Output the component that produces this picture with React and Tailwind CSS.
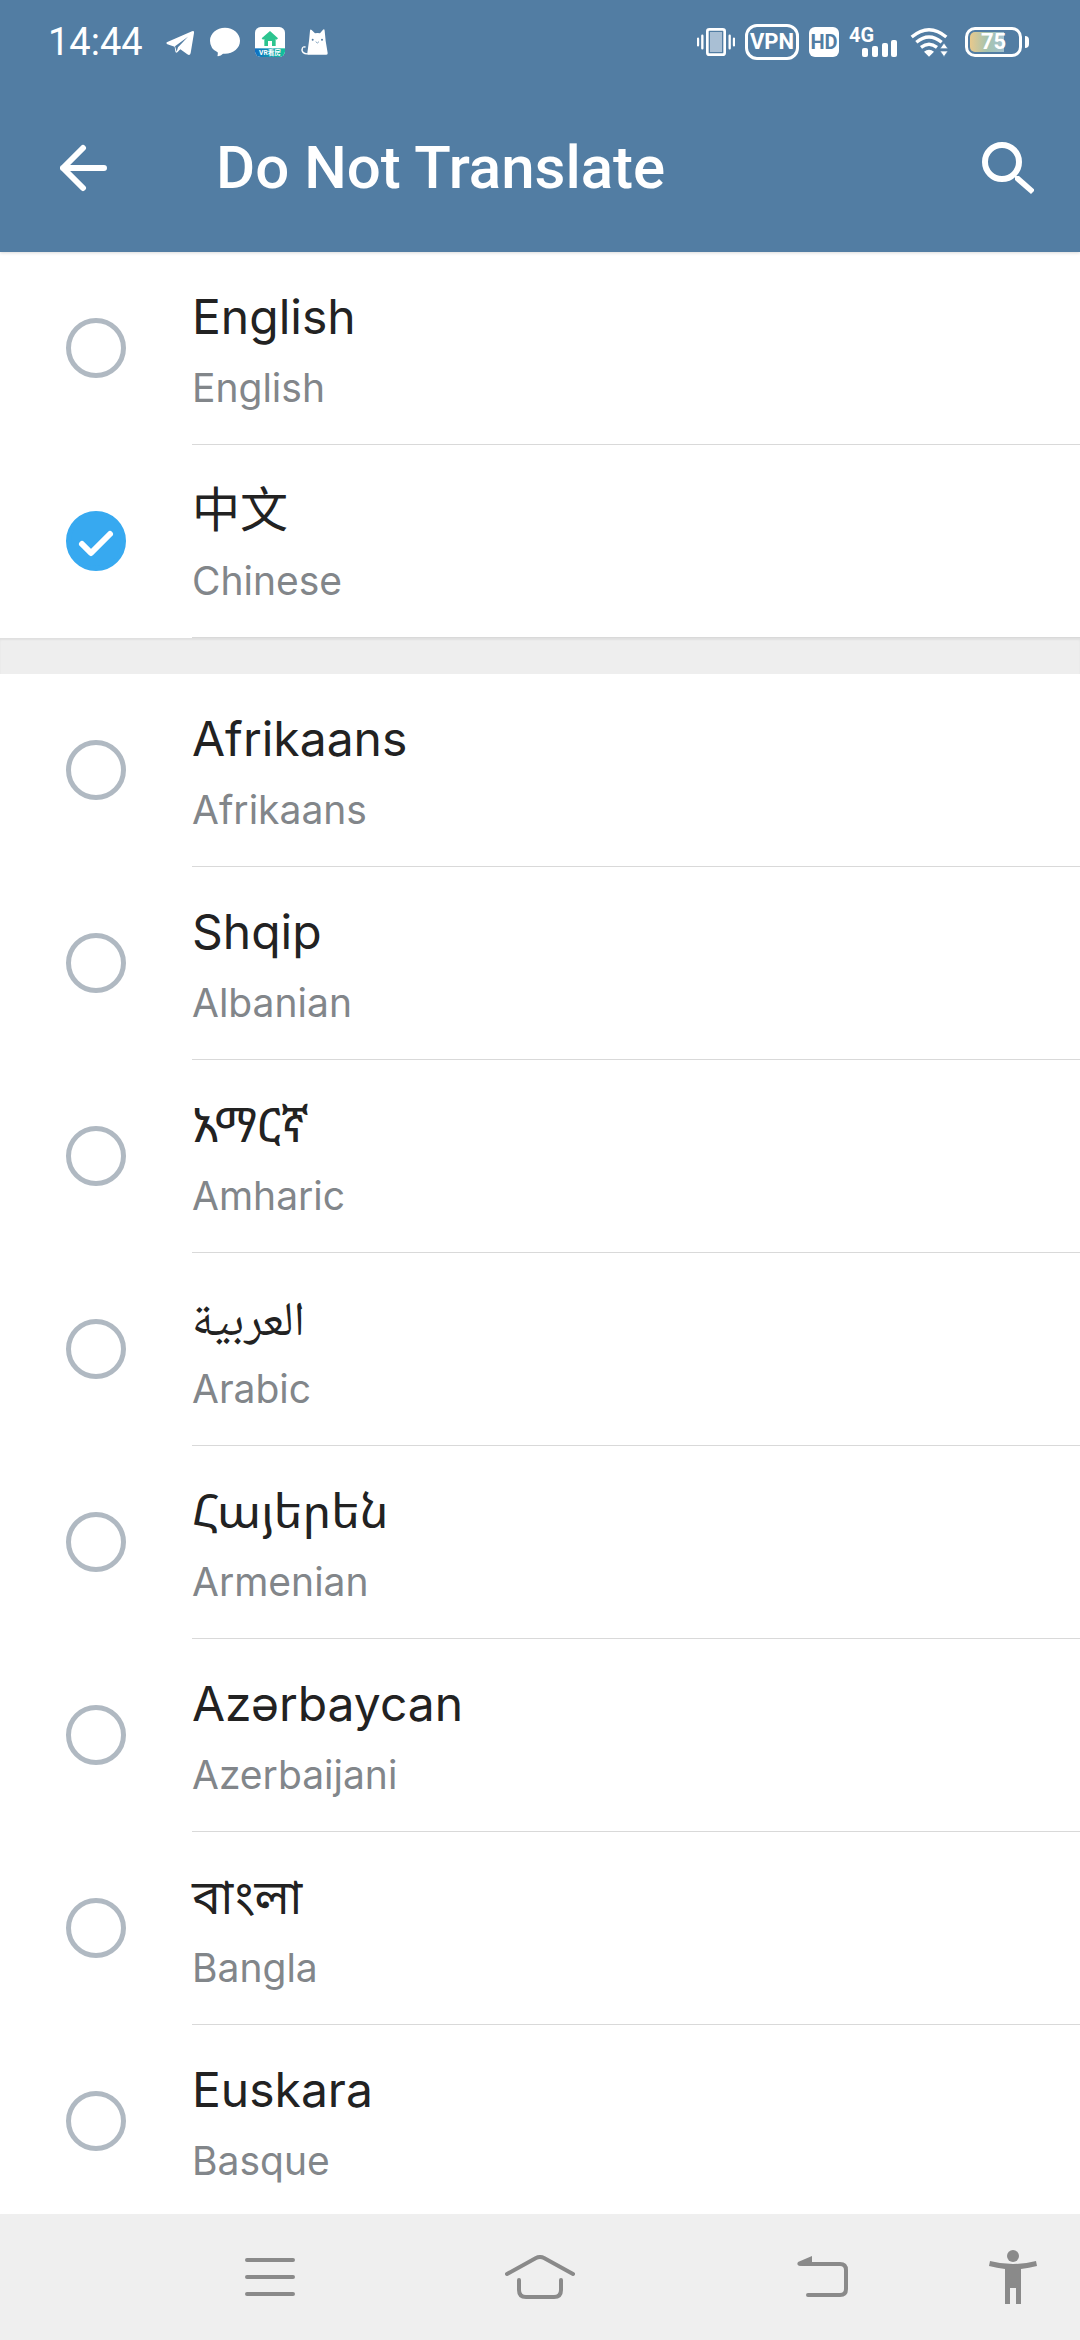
import React, { useState } from 'react';

const SUGGESTED = [
    { code: 'en', native: 'English', name: 'English' },
    { code: 'zh', native: '中文', name: 'Chinese' },
];

const LANGUAGES = [
    { code: 'af', native: 'Afrikaans', name: 'Afrikaans' },
    { code: 'sq', native: 'Shqip', name: 'Albanian' },
    { code: 'am', native: 'አማርኛ', name: 'Amharic' },
    { code: 'ar', native: 'العربية', name: 'Arabic' },
    { code: 'hy', native: 'Հայերեն', name: 'Armenian' },
    { code: 'az', native: 'Azərbaycan', name: 'Azerbaijani' },
    { code: 'bn', native: 'বাংলা', name: 'Bangla' },
    { code: 'eu', native: 'Euskara', name: 'Basque' },
];

const StatusBar = () => (
    <div className='flex h-[84px] items-center justify-between pl-12 pr-[51px] font-[Roboto,"Noto_Sans_CJK_SC",sans-serif]'>
        <div className="flex items-center gap-[15px]">
            <span className="mr-2 text-[38px] leading-none">14:44</span>
            {/* Telegram */}
            <svg viewBox="0 0 87 90" className="h-[30px] w-[29px]" fill="currentColor">
                <path d="M4 45 L78 13 Q85 10 84 18 L74 78 Q72 87 64 82 L43 67 L34 76 Q29 80 28 73 L26 59 L4 52 Q-2 48 4 45Z" />
                <path d="M27 58 L66 29 L36 61 L32 74Z" className="fill-[#527da3]" />
            </svg>
            {/* Chat bubble */}
            <svg viewBox="0 0 90 90" className="h-[30px] w-[30px]" fill="currentColor">
                <path d="M45 2C70 2 90 19 90 41S70 80 45 80Q42 80 39 80Q33 86 24 88Q21 88 23 84Q24 80 23 76Q0 65 0 41C0 19 20 2 45 2Z" />
            </svg>
            {/* Home app */}
            <svg viewBox="0 0 90 90" className="h-[30px] w-[30px]">
                <defs>
                    <linearGradient id="homeBand">
                        <stop offset="0" stopColor="#0f6ec4" />
                        <stop offset="1" stopColor="#12c39a" />
                    </linearGradient>
                    <clipPath id="homeClip">
                        <rect width="90" height="90" rx="17" />
                    </clipPath>
                </defs>
                <g clipPath="url(#homeClip)">
                    <rect width="90" height="90" fill="#fff" />
                    <rect y="64" width="90" height="26" fill="url(#homeBand)" />
                    <path d="M45 12 L69 34 L65 38 L62 36 V57 H51 V42 H39 V57 H28 V36 L24 38 L20 34Z" fill="#2cc48f" />
                    <text x="45" y="84" textAnchor="middle" fill="#fff" fontSize="20" fontWeight="700">VR看房</text>
                </g>
            </svg>
            {/* Cat */}
            <svg viewBox="0 0 90 90" className="h-[30px] w-[30px]">
                <path d="M30 11Q31 5 35 9L45 19Q53 17 60 19L69 8Q73 4 74 11L77 42L83 78Q84 83 79 83H26Q21 83 22 78L27 42Z" fill="currentColor" />
                <path d="M27 80C12 83 3 74 7 64Q9 58 15 60" fill="none" stroke="currentColor" strokeWidth="4" strokeLinecap="round" />
                <g fill="#527da3">
                    <circle cx="38" cy="38" r="3" />
                    <circle cx="66" cy="38" r="3" />
                    <path d="M47 44l5 4 5-4" fill="none" stroke="#527da3" strokeWidth="2" />
                </g>
            </svg>
        </div>

        <div className="flex items-center gap-[10px] font-bold">
            {/* Vibrate */}
            <svg viewBox="0 0 114 90" className="h-[30px] w-[38px]">
                <rect x="31" y="7" width="52" height="76" rx="6" fill="none" stroke="currentColor" strokeWidth="8" />
                <rect x="39" y="15" width="36" height="60" fill="#a9bfd4" />
                <path d="M3 35v20M16 26v38M98 26v38M111 35v20" stroke="currentColor" strokeWidth="7" strokeLinecap="round" />
            </svg>
            <span className="flex h-9 w-[54px] items-center justify-center rounded-xl border-3 border-white text-[22px] leading-none">VPN</span>
            <span className="flex h-[30px] w-[30px] items-center justify-center rounded-md bg-white text-[20px] leading-none text-[#527da3]">HD</span>
            <span className="flex h-[30px] w-[50px] items-start">
                <span className="text-[20px] leading-4">4G</span>
                <svg viewBox="0 0 36 30" className="-ml-3 h-[30px] w-9 shrink-0" fill="currentColor">
                    <rect x="0" y="21" width="6" height="9" rx="2" />
                    <rect x="10" y="19" width="6" height="11" rx="2" />
                    <rect x="20" y="16" width="6" height="14" rx="2" />
                    <rect x="29" y="13" width="6" height="17" rx="2" />
                </svg>
            </span>
            {/* Wifi */}
            <svg viewBox="0 0 120 90" className="h-[30px] w-10">
                <g fill="none" stroke="currentColor" strokeWidth="10">
                    <path d="M8 30Q60 -14 112 30" />
                    <path d="M22 46Q60 14 98 46" />
                    <path d="M36 61Q60 42 84 61" />
                </g>
                <path d="M45 74Q60 62 75 74L60 89Z" fill="currentColor" />
                <path d="M105 48l12 17H93zM93 72h24l-12 17z" fill="currentColor" stroke="#527da3" strokeWidth="2" />
            </svg>
            {/* Battery */}
            <span className="flex items-center gap-[3px] pl-[6px]">
                <span className="relative flex h-[30px] w-[57px] items-center justify-center rounded-[10px] border-3 border-white">
                    <span className="absolute inset-y-[2px] left-[2px] w-[34px] rounded-l-[5px] bg-linear-to-r from-[#e8c98c] via-[#a5c3ae] to-[#a3c1cf]" />
                    <span className="relative text-[22px] leading-none">75</span>
                </span>
                <span className="h-3 w-1 rounded-r-full bg-white" />
            </span>
        </div>
    </div>
);

const Header = () => (
    <header className="relative z-10 shrink-0 bg-[#527da3] text-white shadow-[0_1px_3px_rgba(0,0,0,0.15)]">
        <StatusBar />
        <div className="flex h-[168px] items-center">
            <button type="button" aria-label="Back" className="flex h-full w-[168px] items-center justify-center">
                <svg viewBox="0 0 48 48" className="h-12 w-12" fill="none" stroke="currentColor" strokeWidth="6" strokeLinecap="round" strokeLinejoin="round">
                    <path d="M23 4 L3 24 L23 44M3 24H44" />
                </svg>
            </button>
            <h1 className="ml-12 flex-1 font-[Roboto,sans-serif] text-[60px] font-medium leading-none">Do Not Translate</h1>
            <button type="button" aria-label="Search" className="flex h-full w-36 items-center justify-center">
                <svg viewBox="0 0 52 52" className="h-[52px] w-[52px]" fill="none" stroke="currentColor">
                    <circle cx="20" cy="20" r="17" strokeWidth="6" />
                    <path d="M33 34 L37 34 L53 48 L49 52 L33 38Z" fill="currentColor" stroke="none" />
                </svg>
            </button>
        </div>
    </header>
);

const LanguageRow = ({ language, checked, onToggle }) => (
    <label className="flex cursor-pointer">
        <span className="flex w-48 shrink-0 items-center pb-0.5 pl-[66px]">
            <span className="relative flex">
                <input
                    type="checkbox"
                    checked={checked}
                    onChange={() => onToggle(language.code)}
                    className="h-[60px] w-[60px] appearance-none rounded-full border-5 border-[#b0b9c2] checked:border-[#37a9f0] checked:bg-[#37a9f0]"
                />
                {checked && (
                    <svg viewBox="0 0 60 60" className="pointer-events-none absolute inset-0" fill="none" stroke="#fff" strokeWidth="6" strokeLinecap="round" strokeLinejoin="round">
                        <path d="M16 33 L25 42 L44 23" />
                    </svg>
                )}
            </span>
        </span>
        <span className="flex flex-1 flex-col border-b border-[#d9d9d9] pb-[31px] pt-[35px]">
            <span className="text-[48px] leading-[60px] text-[#222222]">{language.native}</span>
            <span className="mt-4 text-[39px] leading-[50px] text-[#82868a]">{language.name}</span>
        </span>
    </label>
);

const NavBar = () => (
    <nav className="grid h-[126px] shrink-0 grid-cols-[1fr_2fr_2fr_2fr_1fr] bg-[#efefef] text-[#8a8a8a]">
        <button type="button" aria-label="Recent apps" className="col-start-2 flex items-center justify-center">
            <svg viewBox="0 0 50 40" className="h-10 w-[50px]" stroke="currentColor" strokeWidth="4" strokeLinecap="round">
                <path d="M2 3H48M2 20H48M2 37H48" />
            </svg>
        </button>
        <button type="button" aria-label="Home" className="flex items-center justify-center">
            <svg viewBox="0 0 70 44" className="h-11 w-[70px]" fill="none" stroke="currentColor" strokeWidth="4" strokeLinecap="round" strokeLinejoin="round">
                <path d="M2 19 L31 3 Q35 1 39 3 L68 19" />
                <path d="M14 25V35Q14 42 21 42H49Q56 42 56 35V25" />
            </svg>
        </button>
        <button type="button" aria-label="Back" className="flex items-center justify-center">
            <svg viewBox="0 0 76 42" className="h-[42px] w-[76px]" fill="none" stroke="currentColor" strokeWidth="4" strokeLinecap="round">
                <path d="M30 8H68Q74 8 74 14V33Q74 39 68 39H36" />
                <path d="M26 6 L40 0 V8 L28 10Q24 9 26 6Z" fill="currentColor" stroke="none" />
            </svg>
        </button>
        <button type="button" aria-label="Accessibility" className="flex items-center justify-center">
            <svg viewBox="0 0 48 54" className="h-[54px] w-12" fill="currentColor">
                <circle cx="24" cy="6" r="6" />
                <path d="M1 11Q12 14 24 14T47 11L48 16Q40 18 32 19V54H27V38H21V54H16V19Q8 18 0 16Z" />
            </svg>
        </button>
    </nav>
);

const DoNotTranslatePage = () => {
    const [selected, setSelected] = useState(['zh']);

    const toggle = (code) => {
        setSelected(prev => prev.includes(code) ? prev.filter(c => c !== code) : [...prev, code]);
    };

    const renderRows = (list) => list.map(language => (
        <LanguageRow
            key={language.code}
            language={language}
            checked={selected.includes(language.code)}
            onToggle={toggle}
        />
    ));

    return (
        <div className='flex h-screen flex-col bg-white font-[Inter,"Noto_Sans_CJK_SC","Noto_Sans_Armenian","Noto_Naskh_Arabic","Noto_Sans_Ethiopic","Noto_Sans_Bengali","DejaVu_Sans_Condensed",sans-serif]'>
            <Header />
            <main className="min-h-0 flex-1 overflow-y-auto [scrollbar-width:none]">
                <section>{renderRows(SUGGESTED)}</section>
                {/* Section divider */}
                <div className="h-9 bg-[#eeeeee] shadow-[inset_0_2px_2px_rgba(0,0,0,0.06)]" />
                <section>{renderRows(LANGUAGES)}</section>
            </main>
            <NavBar />
        </div>
    );
};

export default DoNotTranslatePage;
